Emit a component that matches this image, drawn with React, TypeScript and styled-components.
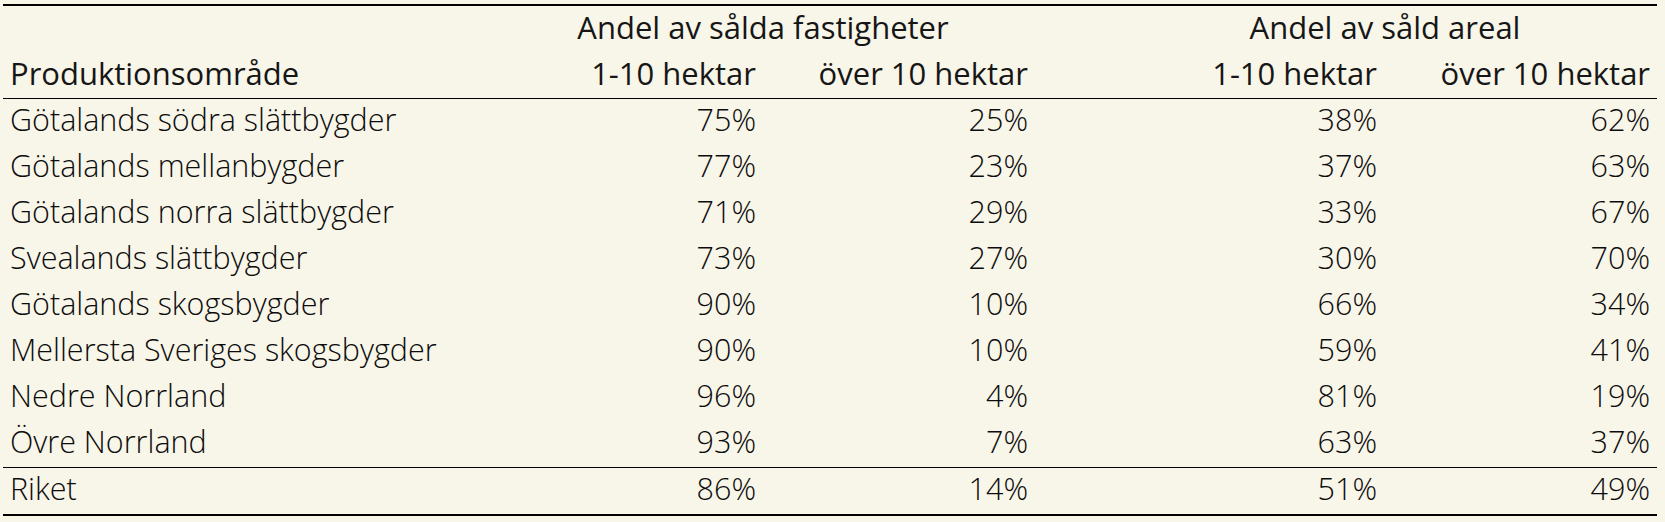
import styled, { createGlobalStyle } from "styled-components";

const GlobalStyle = createGlobalStyle`
  html, body {
    margin: 0;
    padding: 0;
    background: #f8f5e9;
  }
  body {
    font-family: "Open Sans", "Liberation Sans", sans-serif;
    color: #0c0c0c;
  }
`;

const Wrap = styled.div`
  padding: 4px 8px 0 3px;
`;

const Table = styled.table`
  width: 1654px;
  border-collapse: collapse;
  table-layout: fixed;
  border-top: 2px solid #000;
  border-bottom: 2px solid #000;
  font-size: 30.5px;
  font-weight: 300;
`;

const Col = styled.col<{ $w: number }>`
  width: ${(p) => p.$w}px;
`;

const Cell = styled.td<{ $align?: "left" | "right" | "center" }>`
  height: 46px;
  box-sizing: border-box;
  padding: 1px 7px 6px;
  line-height: 39px;
  white-space: nowrap;
  text-align: ${(p) => p.$align ?? "right"};
  vertical-align: bottom;
`;

const HeadCell = styled(Cell).attrs({ as: "th" })`
  padding-top: 2px;
  padding-bottom: 5px;
  font-size: 31px;
  font-weight: 400;
  color: #161616;
`;

const HeadRow = styled.tr<{ $rule?: boolean }>`
  border-bottom: ${(p) => (p.$rule ? "1px solid #000" : "none")};
`;

const TotalRow = styled.tr`
  border-top: 1px solid #000;
`;

type Row = [string, string, string, string, string];

const rows: Row[] = [
  ["Götalands södra slättbygder", "75%", "25%", "38%", "62%"],
  ["Götalands mellanbygder", "77%", "23%", "37%", "63%"],
  ["Götalands norra slättbygder", "71%", "29%", "33%", "67%"],
  ["Svealands slättbygder", "73%", "27%", "30%", "70%"],
  ["Götalands skogsbygder", "90%", "10%", "66%", "34%"],
  ["Mellersta Sveriges skogsbygder", "90%", "10%", "59%", "41%"],
  ["Nedre Norrland", "96%", "4%", "81%", "19%"],
  ["Övre Norrland", "93%", "7%", "63%", "37%"],
];

const total: Row = ["Riket", "86%", "14%", "51%", "49%"];

function DataCells({ r }: { r: Row }) {
  return (
    <>
      <Cell $align="left">{r[0]}</Cell>
      <Cell>{r[1]}</Cell>
      <Cell>{r[2]}</Cell>
      <Cell />
      <Cell>{r[3]}</Cell>
      <Cell>{r[4]}</Cell>
    </>
  );
}

export default function App() {
  return (
    <>
      <GlobalStyle />
      <Wrap>
        <Table>
          <colgroup>
            <Col $w={488} />
            <Col $w={272} />
            <Col $w={272} />
            <Col $w={78} />
            <Col $w={271} />
            <Col $w={273} />
          </colgroup>
          <thead>
            <HeadRow>
              <HeadCell />
              <HeadCell colSpan={2} $align="center">
                Andel av sålda fastigheter
              </HeadCell>
              <HeadCell />
              <HeadCell colSpan={2} $align="center">
                Andel av såld areal
              </HeadCell>
            </HeadRow>
            <HeadRow $rule>
              <HeadCell $align="left">Produktionsområde</HeadCell>
              <HeadCell>1-10 hektar</HeadCell>
              <HeadCell>över 10 hektar</HeadCell>
              <HeadCell />
              <HeadCell>1-10 hektar</HeadCell>
              <HeadCell>över 10 hektar</HeadCell>
            </HeadRow>
          </thead>
          <tbody>
            {rows.map((r) => (
              <tr key={r[0]}>
                <DataCells r={r} />
              </tr>
            ))}
            <TotalRow>
              <DataCells r={total} />
            </TotalRow>
          </tbody>
        </Table>
      </Wrap>
    </>
  );
}
